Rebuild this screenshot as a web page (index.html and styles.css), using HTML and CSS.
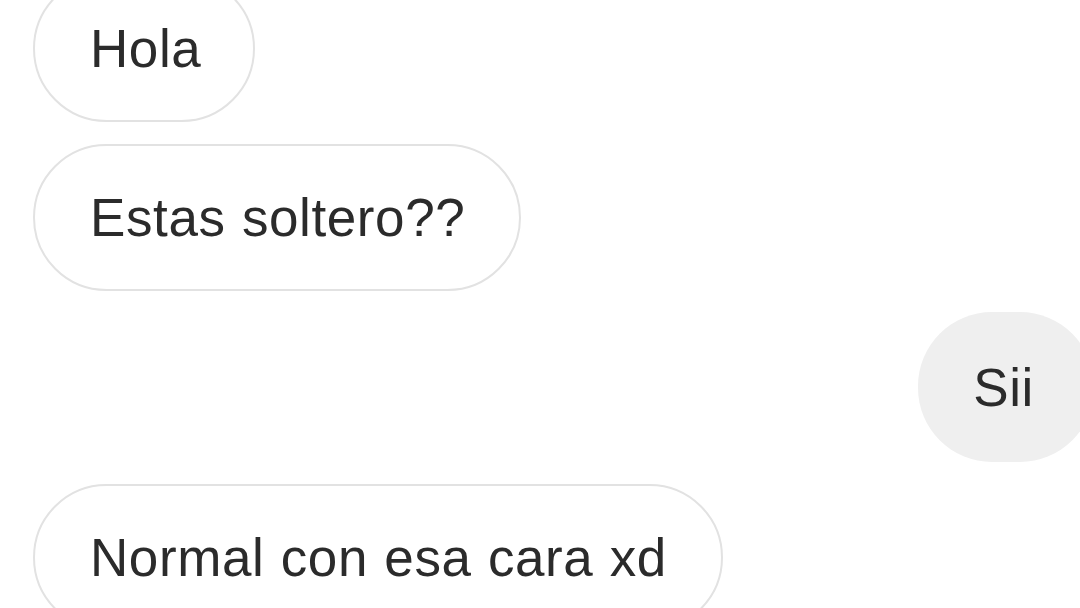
FILE: index.html
```html
<!DOCTYPE html>
<html lang="es">
<head>
<meta charset="utf-8">
<link rel="stylesheet" href="styles.css">
</head>
<body>
<div class="chat">
  <div class="msg in first">Hola</div>
  <div class="msg in">Estas soltero??</div>
  <div class="msg out">Sii</div>
  <div class="msg in">Normal con esa cara xd</div>
</div>
</body>
</html>
```
FILE: styles.css
```css
html, body {
  margin: 0;
  padding: 0;
  background: #ffffff;
  width: 1080px;
  height: 608px;
  overflow: hidden;
}
.chat {
  display: flex;
  flex-direction: column;
  align-items: flex-start;
  gap: 22px;
  padding-left: 33px;
  margin-top: -25px;
  font-family: "Liberation Sans", Arial, sans-serif;
  font-size: 53px;
  letter-spacing: 0.6px;
  word-spacing: 1px;
  color: #2b2b2b;
}
.msg {
  box-sizing: border-box;
  height: 147px;
  display: flex;
  align-items: center;
  padding: 0 54px 0 55px;
  border-radius: 74px;
  white-space: nowrap;
}
.in {
  border: 2px solid #e2e2e2;
  background: #ffffff;
}
.first {
  padding-right: 52px;
}
.out {
  align-self: flex-end;
  background: #efefef;
  height: 150px;
  padding: 0 60px 0 55px;
  margin-top: -1px;
  margin-right: -14px;
}
```
